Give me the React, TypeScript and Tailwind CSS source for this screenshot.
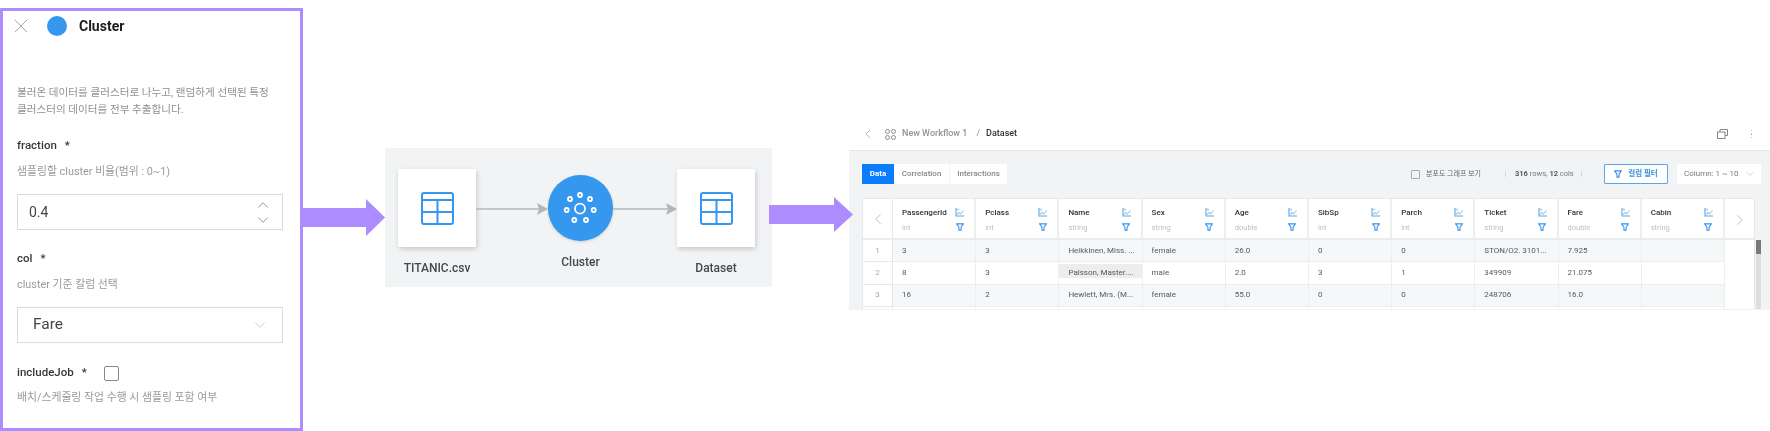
import type { JSX } from 'react';
import { ChevronDown, ChevronLeft, ChevronRight, ChevronUp, X } from 'lucide-react';

const FONT = "font-['Roboto','Noto_Sans_CJK_KR',sans-serif]";
const PURPLE = '#ad8cff';
const BLUE = '#3597ee';

const COLUMNS = [
  { name: 'PassengerId', type: 'int' },
  { name: 'Pclass', type: 'int' },
  { name: 'Name', type: 'string' },
  { name: 'Sex', type: 'string' },
  { name: 'Age', type: 'double' },
  { name: 'SibSp', type: 'int' },
  { name: 'Parch', type: 'int' },
  { name: 'Ticket', type: 'string' },
  { name: 'Fare', type: 'double' },
  { name: 'Cabin', type: 'string' },
];

const ROWS = [
  ['3', '3', 'Heikkinen, Miss. ...', 'female', '26.0', '0', '0', 'STON/O2. 3101...', '7.925', ''],
  ['8', '3', 'Palsson, Master....', 'male', '2.0', '3', '1', '349909', '21.075', ''],
  ['16', '2', 'Hewlett, Mrs. (M...', 'female', '55.0', '0', '0', '248706', '16.0', ''],
];

function TableIcon(): JSX.Element {
  return (
    <svg width="33" height="33" viewBox="0 0 33 33" fill="none" stroke={BLUE} strokeWidth="2" aria-hidden="true">
      <rect x="1" y="1" width="31" height="31" rx="2" />
      <path d="M1 8h31M1 20h31M16.500 8v24" />
    </svg>
  );
}

function ClusterIcon(): JSX.Element {
  const dots = [
    [32, 20],
    [22, 24],
    [42, 24],
    [18.700, 35],
    [45.700, 35],
    [26.300, 45],
    [38, 45],
  ];
  return (
    <svg width="65" height="66" viewBox="0 0 65 66" fill="none" stroke="#fff" aria-hidden="true">
      <circle cx="32" cy="33.700" r="5" strokeWidth="1.800" />
      {dots.map(([cx, cy]) => (
        <circle key={`${cx}-${cy}`} cx={cx} cy={cy} r="2" strokeWidth="1.800" />
      ))}
    </svg>
  );
}

function FlowArrow({ width }: { width: number }): JSX.Element {
  return (
    <svg width={width} height="14" viewBox={`0 0 ${width} 14`} className="mt-[33px] shrink-0" aria-hidden="true">
      <path d={`M0 7h${width - 8}`} stroke="#b4b7ba" strokeWidth="1.500" />
      <path d={`M${width - 11} 1l11 6-11 6 2-6z`} fill="#b4b7ba" />
    </svg>
  );
}

function BigArrow({ width, height, shaft, head, className }: { width: number; height: number; shaft: number; head: number; className: string }): JSX.Element {
  const neck = width - head;
  const top = (height - shaft) / 2;
  return (
    <svg width={width} height={height} viewBox={`0 0 ${width} ${height}`} className={`relative z-10 shrink-0 ${className}`} aria-hidden="true">
      <path
        d={`M0 ${top}H${neck}V0L${width} ${height / 2}L${neck} ${height}V${top + shaft}H0Z`}
        fill={PURPLE}
      />
    </svg>
  );
}

function ChartIcon(): JSX.Element {
  return (
    <svg width="9" height="9" viewBox="0 0 9 9" fill="none" stroke="#5ea6e6" strokeWidth="1.100" aria-hidden="true">
      <path d="M1 0v8h8" />
      <path d="M2 6.500l2-2 1.500 1.500L8.500 2.500" stroke="#9cc8ee" />
      <path d="M1.500 1.500h2.500" stroke="#9cc8ee" strokeWidth="1.500" />
    </svg>
  );
}

function FunnelIcon({ size = 8, color = BLUE }: { size?: number; color?: string }): JSX.Element {
  return (
    <svg width={size} height={size} viewBox="0 0 9 9" fill="none" stroke={color} strokeWidth="1.200" aria-hidden="true">
      <path d="M.7 1h7.600L5.700 4.700v3.300H3.300V4.700z" />
    </svg>
  );
}

function SettingsPanel(): JSX.Element {
  return (
    <section className="h-[423px] w-[303px] shrink-0 border-[3px] border-[#ad8cff] bg-white">
      <header className="flex h-[30px] items-center pl-[6px]">
        <X className="h-[24px] w-[24px] text-[#a3a7ab]" strokeWidth={1} />
        <span className="ml-[14px] h-[20px] w-[20px] rounded-full bg-[#3597ee]" />
        <h2 className="ml-[12px] text-[14px] font-bold text-[#1c1c1c]">Cluster</h2>
      </header>

      <div className="px-[14px]">
        <p className="mt-[43px] whitespace-nowrap text-[10.600px] leading-[17px] text-[#8d9195]">
          불러온 데이터를 클러스터로 나누고, 랜덤하게 선택된 특정
          <br />
          클러스터의 데이터를 전부 추출합니다.
        </p>

        <div className="mt-[20px] flex h-[16px] items-center gap-[8px] text-[11.500px] font-medium text-[#33383c]">
          fraction <span>*</span>
        </div>
        <p className="mt-[10px] text-[10.850px] leading-[16px] text-[#979b9f]">샘플링할 cluster 비율(범위 : 0~1)</p>
        <div className="mt-[14px] flex h-[36px] w-[266px] items-center justify-between border border-[#d9dbdd] pl-[11px] pr-[10px] text-[14px] text-[#42474b]">
          0.4
          <span className="flex flex-col text-[#70757a]">
            <ChevronUp className="h-[18px] w-[18px]" strokeWidth={1} />
            <ChevronDown className="-mt-[3px] h-[18px] w-[18px]" strokeWidth={1} />
          </span>
        </div>

        <div className="mt-[21px] flex h-[16px] items-center gap-[8px] text-[11.500px] font-medium text-[#33383c]">
          col <span>*</span>
        </div>
        <p className="mt-[10px] text-[10.850px] leading-[16px] text-[#979b9f]">cluster 기준 칼럼 선택</p>
        <div className="mt-[14px] flex h-[36px] w-[266px] items-center justify-between border border-[#d9dbdd] pl-[15px] pr-[13px] text-[15.500px] text-[#42474b]">
          Fare
          <ChevronDown className="h-[18px] w-[18px] text-[#b4b8bc]" strokeWidth={1} />
        </div>

        <div className="mt-[22px] flex h-[16px] items-center text-[11.500px] font-medium text-[#33383c]">
          includeJob <span className="ml-[8px]">*</span>
          <span className="ml-[17px] h-[15px] w-[15px] rounded-[2px] border-[1.500px] border-[#85898d]" />
        </div>
        <p className="mt-[9px] text-[10.850px] leading-[16px] text-[#979b9f]">배치/스케줄링 작업 수행 시 샘플링 포함 여부</p>
      </div>
    </section>
  );
}

function NodeCard({ label }: { label: string }): JSX.Element {
  return (
    <div className="flex w-[78px] shrink-0 flex-col items-center">
      <div className="flex h-[78px] w-[78px] items-center justify-center bg-white shadow-[1px_2px_5px_rgba(0,0,0,0.18)]">
        <TableIcon />
      </div>
      <span className="mt-[13px] whitespace-nowrap text-[12px] font-medium leading-[16px] text-[#45494d]">{label}</span>
    </div>
  );
}

function WorkflowCanvas(): JSX.Element {
  return (
    <section className="mt-[140px] flex h-[139px] w-[387px] shrink-0 items-start bg-[#f1f3f5] pl-[13px] pt-[21px]">
      <NodeCard label="TITANIC.csv" />
      <FlowArrow width={72} />
      <div className="flex w-[65px] shrink-0 flex-col items-center pt-[6px]">
        <div className="flex h-[66px] w-[65px] items-center justify-center rounded-full bg-[#3597ee] shadow-[0_1px_3px_rgba(0,0,0,0.15)]">
          <ClusterIcon />
        </div>
        <span className="mt-[13px] text-[12px] font-medium leading-[16px] text-[#45494d]">Cluster</span>
      </div>
      <FlowArrow width={64} />
      <NodeCard label="Dataset" />
    </section>
  );
}

function DataTable(): JSX.Element {
  return (
    <div className="relative mt-[14px] flex">
      <div className="h-[111px] w-[893px] shrink-0 overflow-hidden border-x border-t border-[#e6e8ea] bg-white">
        <div className="flex h-[41px] border-b-2 border-[#e9ebed]">
          <div className="flex w-[30px] shrink-0 items-center justify-center border-r border-[#e6e8ea]">
            <ChevronLeft className="h-[18px] w-[18px] text-[#a5a9ad]" strokeWidth={1} />
          </div>
          {COLUMNS.map((col) => (
            <div key={col.name} className="flex w-[83.200px] shrink-0 justify-between border-r-2 border-[#eceef0] pl-[9px] pr-[10px] pt-[8px]">
              <div>
                <div className="whitespace-nowrap text-[8px] font-medium leading-[11px] text-[#2f3337]">{col.name}</div>
                <div className="mt-[4px] text-[7.500px] leading-[11px] text-[#bcbfc2]">{col.type}</div>
              </div>
              <div className="flex flex-col items-center gap-[6px] pt-[1px]">
                <ChartIcon />
                <FunnelIcon />
              </div>
            </div>
          ))}
        </div>
        {ROWS.map((row, i) => (
          <div key={row[0]} className="flex h-[22.300px]">
            <div className="flex w-[30px] shrink-0 items-center justify-center border-b border-r border-[#e6e8ea] text-[8px] text-[#a5a9ad]">
              {i + 1}
            </div>
            <div className={`flex ${i === 1 ? 'bg-white' : 'bg-[#f6f7f9]'}`}>
              {row.map((cell, j) => (
                <div
                  key={COLUMNS[j].name}
                  className="relative flex w-[83.200px] shrink-0 items-center overflow-hidden whitespace-nowrap border-b border-r border-[#eceef0] pl-[9px] text-[8px] text-[#55595d]"
                >
                  {i === 1 && j === 2 && <span className="absolute inset-x-0 top-[2px] h-[14px] bg-[#ededed]" />}
                  <span className="relative">{cell}</span>
                </div>
              ))}
            </div>
          </div>
        ))}
        <div className="flex h-[4px]">
          <div className="w-[30px] shrink-0 border-r border-[#e6e8ea]" />
          {COLUMNS.map((col) => (
            <div key={col.name} className="w-[83.200px] shrink-0 border-r border-[#eceef0]" />
          ))}
        </div>
      </div>
      <div className="ml-[1px] h-[69px] w-[5px] shrink-0 self-end bg-[#dcdee0]">
        <div className="h-[14px] w-[5px] bg-[#77797c]" />
      </div>
      <ChevronRight className="absolute left-[869px] top-[13px] h-[18px] w-[18px] text-[#a5a9ad]" strokeWidth={1} />
    </div>
  );
}

function DatasetPanel(): JSX.Element {
  return (
    <section className="mt-[102px] w-[921px] shrink-0">
      <div className="flex h-[40px] items-center bg-white pl-[11px] pr-[18px] pt-[8px]">
        <ChevronLeft className="h-[16px] w-[16px] text-[#a5a9ad]" strokeWidth={1.200} />
        <svg width="11" height="11" viewBox="0 0 11 11" fill="none" stroke="#878b8f" strokeWidth="1" className="ml-[9px]" aria-hidden="true">
          <circle cx="2.500" cy="2.500" r="2" />
          <circle cx="8.500" cy="2.500" r="2" />
          <circle cx="2.500" cy="8.500" r="2" />
          <circle cx="8.500" cy="8.500" r="2" />
        </svg>
        <span className="ml-[6px] text-[9px] font-medium text-[#8f9397]">New Workflow 1</span>
        <span className="ml-[9px] text-[9px] text-[#8f9397]">/</span>
        <span className="ml-[6px] text-[9px] font-medium text-[#2f3337]">Dataset</span>
        <svg width="11" height="10" viewBox="0 0 11 10" fill="none" stroke="#777b7f" strokeWidth="0.900" className="ml-auto" aria-hidden="true">
          <path d="M3 3V.5h7.500v6H8" />
          <rect x=".5" y="3" width="7.500" height="6.500" />
        </svg>
        <span className="ml-[23px] flex flex-col gap-[2px]">
          <span className="h-[1.500px] w-[1.500px] rounded-full bg-[#a5a9ad]" />
          <span className="h-[1.500px] w-[1.500px] rounded-full bg-[#a5a9ad]" />
          <span className="h-[1.500px] w-[1.500px] rounded-full bg-[#a5a9ad]" />
        </span>
      </div>

      <div className="h-[160px] overflow-hidden border-t border-[#e6e8ea] bg-[#f1f3f5] pl-[13px] pt-[13px]">
        <div className="flex h-[20px] items-center whitespace-nowrap">
          <span className="flex h-[20px] w-[32px] shrink-0 items-center justify-center bg-[#0a7dfa] text-[8px] font-bold text-white">Data</span>
          <span className="flex h-[20px] w-[55px] shrink-0 items-center justify-center bg-white text-[8px] font-medium text-[#85898d]">Correlation</span>
          <span className="ml-[1px] flex h-[20px] w-[57px] shrink-0 items-center justify-center bg-white text-[8px] font-medium text-[#85898d]">Interactions</span>

          <span className="ml-[404px] h-[9px] w-[9px] shrink-0 rounded-[1px] border border-[#a8acb0]" />
          <span className="ml-[6px] w-[57px] shrink-0 text-[7px] text-[#62666a]">분포도 그래프 보기</span>
          <span className="ml-[22px] h-[6px] w-px shrink-0 bg-[#d5d7d9]" />
          <span className="ml-[9px] w-[57px] shrink-0 text-[7.500px] text-[#777b7f]">
            <b className="font-bold text-[#55595d]">316</b> rows, <b className="font-bold text-[#55595d]">12</b> cols
          </span>
          <span className="ml-[9px] h-[6px] w-px shrink-0 bg-[#d5d7d9]" />
          <span className="ml-[22px] flex h-[20px] w-[64px] shrink-0 items-center justify-center gap-[6px] rounded-[1px] border border-[#5aa3e6] bg-white text-[7.500px] font-bold text-[#3b8fe0]">
            <FunnelIcon size={8} color="#3b8fe0" /> 컬럼 필터
          </span>
          <span className="ml-[9px] flex h-[20px] w-[84px] shrink-0 items-center justify-between rounded-[1px] bg-white pl-[7px] pr-[5px] text-[8px] text-[#777b7f]">
            Column: 1 ~ 10
            <ChevronDown className="h-[12px] w-[12px] text-[#a5a9ad]" strokeWidth={1} />
          </span>
        </div>
        <DataTable />
      </div>
    </section>
  );
}

export default function App(): JSX.Element {
  return (
    <div className={`flex h-[431px] w-[1770px] items-start overflow-hidden bg-white pt-[8px] blur-[0.35px] ${FONT}`}>
      <SettingsPanel />
      <BigArrow width={82} height={37} shaft={19} head={19} className="mt-[191px]" />
      <WorkflowCanvas />
      <BigArrow width={84} height={35} shaft={19} head={19} className="-ml-[3px] mt-[189px]" />
      <div className="-ml-[4px]">
        <DatasetPanel />
      </div>
    </div>
  );
}
